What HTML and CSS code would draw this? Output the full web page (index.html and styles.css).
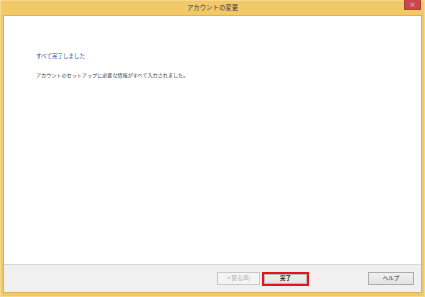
FILE: index.html
```html
<!DOCTYPE html>
<html lang="ja">

<head>
    <meta charset="UTF-8">
    <meta name="viewport" content="width=device-width, initial-scale=1.0">
    <title>アカウントの変更</title>
    <link rel="stylesheet" href="styles.css">
</head>

<body>

    <div class="window">
        <!-- Title bar -->
        <div class="titlebar">
            <div class="title">アカウントの変更</div>
            <div class="close">×</div>
        </div>

        <!-- Client area -->
        <div class="client">
            <div class="main">
                <div class="heading">すべて完了しました</div>
                <div class="message">アカウントのセットアップに必要な情報がすべて入力されました。</div>
            </div>
            <div class="footer">
                <button class="btn btn-back" disabled>&lt; 戻る(B)</button>
                <button class="btn btn-finish">完了</button>
                <button class="btn btn-help">ヘルプ</button>
            </div>
        </div>
    </div>

</body>

</html>
```

FILE: styles.css
```css
/* Page */
body {
    margin: 0;
    padding: 0;
    width: 425px;
    height: 297px;
    overflow: hidden;
    font-family: "Noto Sans CJK JP", "Noto Sans", sans-serif;
    background-color: #f2c967;
}

/* Window frame */
.window {
    width: 425px;
    height: 297px;
    box-sizing: border-box;
    padding: 0 3px 4px 3px;
    display: flex;
    flex-direction: column;
    background-color: #f2c967;
    box-shadow: inset 0 0 0 1px #f6d88e;
}

/* Title bar */
.titlebar {
    position: relative;
    height: 15px;
    display: flex;
    justify-content: center;
    align-items: center;
}

.title {
    font-size: 6.4px;
    color: #3a3a3a;
    line-height: 1;
    padding-top: 1px;
}

.close {
    position: absolute;
    top: 0;
    right: 1px;
    width: 17px;
    height: 10px;
    box-sizing: border-box;
    background-color: #c9474b;
    border: 1px solid #b53c40;
    border-top: none;
    color: #f6dede;
    font-size: 7px;
    line-height: 9px;
    text-align: center;
}

/* Client area */
.client {
    flex: 1;
    display: flex;
    flex-direction: column;
    border: 1px solid #d9b35b;
    background-color: #ffffff;
}

.main {
    flex: 1;
    padding: 36px 0 0 32px;
}

.heading {
    font-size: 5.5px;
    line-height: 8px;
    color: #2f50c0;
}

.message {
    font-size: 5.1px;
    line-height: 8px;
    color: #3c3c3c;
    margin-top: 11px;
}

/* Footer with buttons */
.footer {
    height: 28px;
    box-sizing: border-box;
    border-top: 1px solid #d8d8d8;
    background-color: #f0f0f0;
    display: flex;
    align-items: flex-start;
    padding: 7px 7px 0 0;
    justify-content: flex-end;
}

.btn {
    height: 13px;
    box-sizing: border-box;
    padding: 0;
    font-family: "Noto Sans CJK JP", "Noto Sans", sans-serif;
    font-size: 5.5px;
    line-height: 1;
    border: 1px solid #acacac;
    background: linear-gradient(#f0f0f0, #e2e2e2);
    color: #222222;
}

.btn-back {
    width: 43px;
    border-color: #c9c9c9;
    background: #f4f4f4;
    color: #a6a6a6;
    margin-right: 2px;
}

.btn-finish {
    width: 47px;
    height: 14px;
    border: 2px solid #e8141c;
    box-shadow: inset 0 0 0 1px #b8b8b8;
    font-weight: bold;
}

.btn-help {
    width: 46px;
    margin-left: 59px;
}
```
